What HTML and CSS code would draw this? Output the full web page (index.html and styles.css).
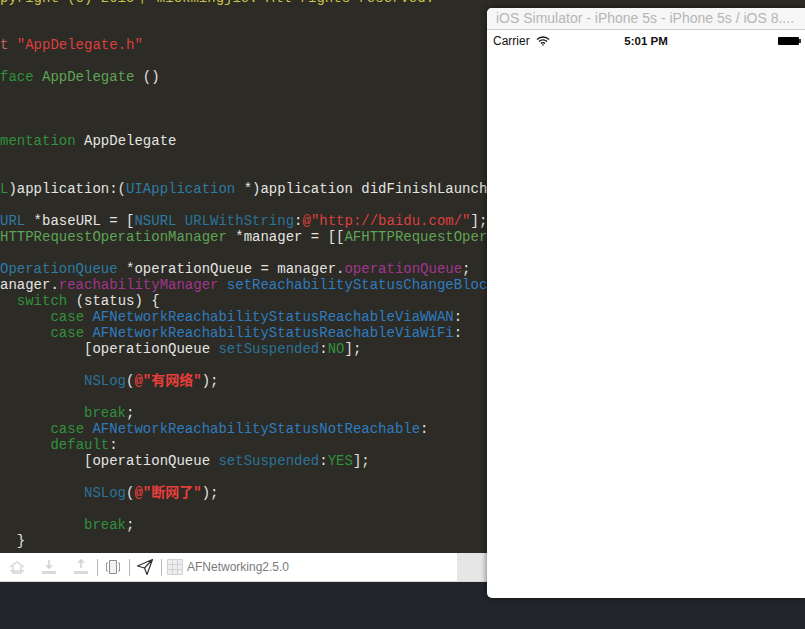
FILE: index.html
```html
<!DOCTYPE html>
<html lang="en">
<head>
<meta charset="utf-8">
<title>AFNetworking2.5.0</title>
<link rel="stylesheet" href="styles.css">
</head>
<body>
<main class="desktop">
<section class="xcode">
<pre class="code"><code><span class="cm">pyright (c) 2015年 mickmingjie. All rights reserved.</span>

<span class="str2">t </span><span class="str">"AppDelegate.h"</span>

<span class="kw">face</span> <span class="ty">AppDelegate</span> ()



<span class="kw">mentation</span> AppDelegate


<span class="kw">L</span>)application:(<span class="cl">UIApplication</span> *)application didFinishLaunch

<span class="cl">URL</span> *baseURL = [<span class="cl">NSURL</span> <span class="me">URLWithString</span>:<span class="str">@"http://baidu.com/"</span>];
<span class="ty">HTTPRequestOperationManager</span> *manager = [[<span class="ty">AFHTTPRequestOper</span>

<span class="cl">OperationQueue</span> *operationQueue = manager.<span class="pr">operationQueue</span>;
anager.<span class="pr">reachabilityManager</span> <span class="bl">setReachabilityStatusChangeBloc</span>
  <span class="kw">switch</span> (status) {
      <span class="kw">case</span> <span class="bl">AFNetworkReachabilityStatusReachableViaWWAN</span>:
      <span class="kw">case</span> <span class="bl">AFNetworkReachabilityStatusReachableViaWiFi</span>:
          [operationQueue <span class="me">setSuspended</span>:<span class="kw">NO</span>];

          <span class="me">NSLog</span>(<span class="str cjk">@"有网络"</span>);

          <span class="kw">break</span>;
      <span class="kw">case</span> <span class="bl">AFNetworkReachabilityStatusNotReachable</span>:
      <span class="kw">default</span>:
          [operationQueue <span class="me">setSuspended</span>:<span class="kw">YES</span>];

          <span class="me">NSLog</span>(<span class="str cjk">@"断网了"</span>);

          <span class="kw">break</span>;
  }</code></pre>
<div class="toolbar">
<div class="tools">
<svg class="ic" viewBox="0 0 18 18"><path d="M2 9l7-5 7 5M5 8v7h8V8M2 13h14" fill="none" stroke="#d6d6d6" stroke-width="1.500"/></svg>
<svg class="ic" viewBox="0 0 18 18"><path d="M9 2v8M6 7l3 3 3-3" fill="none" stroke="#d2d2d2" stroke-width="1.600"/><path d="M2 13h14v3H2z" fill="#dadada"/></svg>
<svg class="ic" viewBox="0 0 18 18"><path d="M9 10V2M6 5l3-3 3 3" fill="none" stroke="#d2d2d2" stroke-width="1.600"/><path d="M2 13h14v3H2z" fill="#dadada"/></svg>
<span class="sep"></span>
<svg class="ic" viewBox="0 0 18 18"><path d="M5.500 2.500h7v13h-7z" fill="#f2f2f2" stroke="#8f8f8f"/><path d="M4 5H2.500v8H4M14 5h1.500v8H14" fill="none" stroke="#9a9a9a"/></svg>
<span class="sep"></span>
<svg class="ic" viewBox="0 0 18 18"><path d="M16.500 1.500L1.500 8l7 2 2.500 6.500zM8.500 10l8-8.500" fill="none" stroke="#333" stroke-width="1.200" stroke-linejoin="round"/></svg>
<span class="sep"></span>
<svg class="target" viewBox="0 0 16 16"><path d="M.5.500h15v15H.500zM5.500.500v15M10.500.500v15M.5 5.500h15M.5 10.500h15" fill="#eee" stroke="#d2d2d2"/></svg>
<span class="scheme">AFNetworking2.5.0</span>
</div>
<div class="tool-end"></div>
</div>
</section>
<section class="simulator">
<header class="sim-title">iOS Simulator - iPhone 5s - iPhone 5s / iOS 8....</header>
<div class="status">
<div class="carrier">Carrier
<svg class="wifi" viewBox="0 0 14 10"><path d="M1 3.500a8.500 8.500 0 0 1 12 0M3 5.500a5.700 5.700 0 0 1 8 0M5 7.500a2.800 2.800 0 0 1 4 0" fill="none" stroke="#111" stroke-width="1.300"/><path d="M7 10L5.800 8.500h2.400z" fill="#111"/></svg>
</div>
<div class="clock">5:01 PM</div>
<div class="battery"><span class="cell"></span><span class="nub"></span></div>
</div>
</section>
</main>
</body>
</html>
```

FILE: styles.css
```css
html, body {
  margin: 0;
  padding: 0;
  height: 100%;
  background: #22262a;
  overflow: hidden;
}

.desktop {
  position: relative;
  width: 805px;
  height: 629px;
  overflow: hidden;
}

.xcode {
  display: flex;
  flex-direction: column;
  height: 100%;
}

.code {
  flex: none;
  height: 553px;
  margin: 0;
  box-sizing: border-box;
  overflow: hidden;
  background: #2c2b25;
  color: #e4e4e2;
  font: 14px/16px "Liberation Mono", "Noto Sans CJK SC", monospace;
  white-space: pre;
}

.code code {
  display: block;
  margin-top: -10px;
  font: inherit;
}

.cm {
  display: block;
  margin-bottom: -1px;
  color: #c9c24a;
}

.str { color: #de3f3d; }
.cjk { font-weight: bold; color: #e83e3c; }
.str2 { color: #c8695f; }
.kw { color: #31913c; }
.ty { color: #5fa356; }
.cl { color: #2f7aa3; }
.me { color: #2b7399; }
.bl { color: #2f7cc0; }
.pr { color: #a2368f; }

.toolbar {
  flex: none;
  display: flex;
  width: 487px;
  height: 28px;
  background: #fff;
  border-bottom: 1px solid #d8d8d8;
}

.tools {
  flex: 1;
  display: flex;
  align-items: center;
  padding-left: 1px;
}

.tool-end {
  width: 30px;
  background: #e6e6e6;
}

.ic {
  width: 18px;
  height: 18px;
  margin: 0 7px;
}

.sep {
  width: 1px;
  height: 17px;
  margin-right: -1px;
  background: #b8b8b8;
}

.target {
  width: 16px;
  height: 16px;
  margin: 0 4px 0 6px;
}

.scheme {
  font: 12px "Liberation Sans", sans-serif;
  color: #7a7a7a;
}

.simulator {
  position: absolute;
  left: 487px;
  top: 8px;
  width: 318px;
  height: 590px;
  background: #fff;
  border-radius: 5px 0 0 5px;
  box-shadow: 0 0 6px rgba(0, 0, 0, .55);
}

.sim-title {
  height: 22px;
  box-sizing: border-box;
  padding-left: 9px;
  background: #f6f6f6;
  border-bottom: 1px solid #cfcfcf;
  border-radius: 5px 0 0 0;
  color: #b5b5b5;
  font: 14px/21px "Liberation Sans", sans-serif;
  white-space: nowrap;
  overflow: hidden;
}

.status {
  display: grid;
  grid-template-columns: 1fr auto 1fr;
  align-items: center;
  height: 21px;
  padding: 0 4px 0 6px;
  font: 12px "Liberation Sans", sans-serif;
  color: #111;
}

.carrier {
  display: flex;
  align-items: center;
  gap: 6px;
}

.wifi {
  width: 14px;
  height: 10px;
}

.clock {
  font-size: 11.500px;
  font-weight: bold;
  transform: translateX(-1px);
}

.battery {
  justify-self: end;
  display: flex;
  align-items: center;
}

.cell {
  width: 21px;
  height: 8px;
  background: #000;
  border-radius: 1px;
}

.nub {
  width: 2px;
  height: 4px;
  background: #333;
}
```
